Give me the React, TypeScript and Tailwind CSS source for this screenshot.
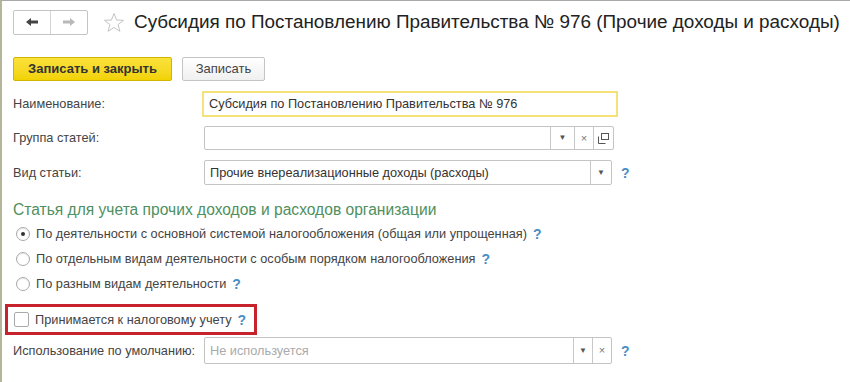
import React from 'react'

const font = { fontFamily: '"Liberation Sans", Arial, sans-serif' }

function Help() {
  return <span className="text-[14px] font-bold text-[#4a8ec4] leading-none">?</span>
}

function Seg({ children, w = 'w-[20px]' }: { children: React.ReactNode; w?: string }) {
  return (
    <div className={`${w} h-full flex items-center justify-center border-l border-[#c8c8c8] text-[#666]`}>
      {children}
    </div>
  )
}

function Caret() {
  return <span className="text-[8px] leading-none text-[#555]">▼</span>
}

function Cross() {
  return <span className="text-[11px] leading-none text-[#777]">×</span>
}

function Radio({ checked, label }: { checked?: boolean; label: string }) {
  return (
    <div className="flex items-center h-[25px] pl-[14px] gap-[6px]">
      <span className="w-[14px] h-[14px] rounded-full border border-[#aaa] bg-white flex items-center justify-center shadow-[inset_0_1px_1px_rgba(0,0,0,0.1)]">
        {checked && <span className="w-[4px] h-[4px] rounded-full bg-[#333]" />}
      </span>
      <span className="text-[12.75px] text-[#444]">{label}</span>
    </div>
  )
}

export default function App() {
  return (
    <div style={font} className="w-[850px] h-[382px] bg-white border-t border-[#a8a8a8] border-l-2 border-l-[#b5b59a] overflow-hidden">
      {/* header */}
      <div className="flex items-center h-[40px] pl-[11px] pt-[2px]">
        <div className="flex h-[25px] border border-[#c4c4c4] rounded-[2px] bg-white">
          <div className="w-[37px] flex items-center justify-center border-r border-[#d4d4d4]">
            <svg width="14" height="10" viewBox="0 0 14 10">
              <path d="M1 5 L6 1 L6 3.5 L13 3.5 L13 6.5 L6 6.5 L6 9 Z" fill="#444" />
            </svg>
          </div>
          <div className="w-[36px] flex items-center justify-center">
            <svg width="14" height="10" viewBox="0 0 14 10">
              <path d="M13 5 L8 1 L8 3.5 L1 3.5 L1 6.5 L8 6.5 L8 9 Z" fill="#b8b8b8" />
            </svg>
          </div>
        </div>
        <svg width="22" height="21" viewBox="0 0 22 21" className="ml-[15px]">
          <path
            d="M11 1.5 L13.6 8 L20.5 8.3 L15.1 12.6 L16.9 19.3 L11 15.5 L5.1 19.3 L6.9 12.6 L1.5 8.3 L8.4 8 Z"
            fill="none"
            stroke="#c4c4c4"
            strokeWidth="1"
          />
        </svg>
        <span className="ml-[9px] text-[18.9px] text-[#222] whitespace-nowrap">
          Субсидия по Постановлению Правительства № 976 (Прочие доходы и расходы)
        </span>
      </div>

      {/* buttons */}
      <div className="flex gap-[10px] pl-[11px] mt-[16px]">
        <button className="h-[24px] w-[159px] rounded-[2px] border border-[#cfb400] bg-gradient-to-b from-[#fbe23a] to-[#f2d200] text-[13px] font-bold text-[#333]">
          Записать и закрыть
        </button>
        <button className="h-[24px] w-[83px] rounded-[2px] border border-[#c4c4c4] bg-gradient-to-b from-white to-[#f0f0f0] text-[13px] text-[#444]">
          Записать
        </button>
      </div>

      {/* fields */}
      <div className="flex items-center mt-[10px] h-[26px]">
        <div className="w-[200px] pl-[11px] text-[12.75px] text-[#444]">Наименование:</div>
        <div className="w-[416px] h-[26px] border-2 border-[#f5e27a] flex items-center pl-[5px] text-[12.75px] text-[#333] bg-white">
          Субсидия по Постановлению Правительства № 976
        </div>
      </div>

      <div className="flex items-center mt-[9px] h-[24px]">
        <div className="w-[202px] pl-[11px] text-[12.75px] text-[#444]">Группа статей:</div>
        <div className="w-[410px] h-[24px] border border-[#c4c4c4] rounded-[2px] flex bg-white">
          <div className="flex-1" />
          <Seg w="w-[24px]">
            <Caret />
          </Seg>
          <Seg w="w-[19px]">
            <Cross />
          </Seg>
          <Seg w="w-[20px]">
            <svg width="11" height="11" viewBox="0 0 11 11">
              <rect x="3.5" y="0.5" width="7" height="6" fill="none" stroke="#555" />
              <path d="M0.5 3.5 V10.5 H7.5" fill="none" stroke="#555" />
            </svg>
          </Seg>
        </div>
      </div>

      <div className="flex items-center mt-[10px] h-[25px]">
        <div className="w-[202px] pl-[11px] text-[12.75px] text-[#444]">Вид статьи:</div>
        <div className="w-[408px] h-[25px] border border-[#c4c4c4] rounded-[2px] flex items-center bg-white">
          <div className="flex-1 pl-[5px] text-[12.75px] text-[#333]">Прочие внереализационные доходы (расходы)</div>
          <Seg w="w-[21px]">
            <Caret />
          </Seg>
        </div>
        <div className="ml-[9px]">
          <Help />
        </div>
      </div>

      {/* group */}
      <div className="pl-[11px] mt-[15px] text-[15.6px] text-[#4f8f60] leading-[20px]">
        Статья для учета прочих доходов и расходов организации
      </div>
      <div className="mt-[1px]">
        <div className="flex items-center gap-[6px]">
          <Radio checked label="По деятельности с основной системой налогообложения (общая или упрощенная)" />
          <Help />
        </div>
        <div className="flex items-center gap-[6px]">
          <Radio label="По отдельным видам деятельности с особым порядком налогообложения" />
          <Help />
        </div>
        <div className="flex items-center gap-[6px]">
          <Radio label="По разным видам деятельности" />
          <Help />
        </div>
      </div>

      <div className="ml-[3px] mt-[8px] w-[252px] h-[31px] border-[3px] border-[#c8232c] flex items-center pl-[6px] gap-[6px]">
        <span className="w-[15px] h-[15px] border border-[#aaa] rounded-[2px] bg-white" />
        <span className="text-[12.75px] text-[#444]">Принимается к налоговому учету</span>
        <Help />
      </div>

      <div className="flex items-center mt-[2px] h-[27px]">
        <div className="w-[202px] pl-[11px] text-[12.75px] text-[#444] whitespace-nowrap">Использование по умолчанию:</div>
        <div className="w-[408px] h-[27px] border border-[#c4c4c4] rounded-[2px] flex items-center bg-white">
          <div className="flex-1 pl-[5px] text-[12.75px] text-[#aaa]">Не используется</div>
          <Seg w="w-[19px]">
            <Caret />
          </Seg>
          <Seg w="w-[19px]">
            <Cross />
          </Seg>
        </div>
        <div className="ml-[9px]">
          <Help />
        </div>
      </div>
    </div>
  )
}
